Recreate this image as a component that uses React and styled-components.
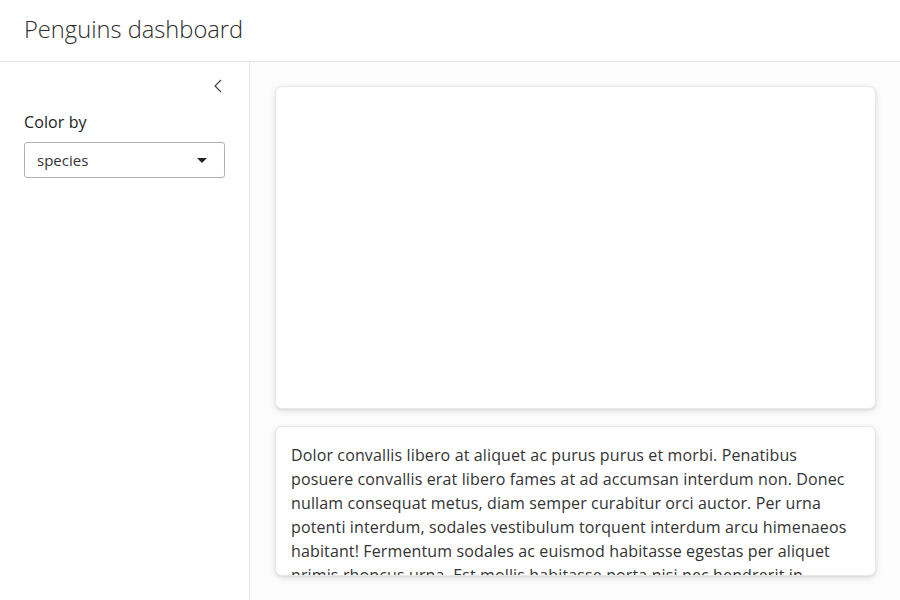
import React from 'react';
import styled, { createGlobalStyle } from 'styled-components';

const GlobalStyle = createGlobalStyle`
  html, body, #root {
    margin: 0;
    height: 100%;
  }
  body {
    font-family: "Open Sans", "Noto Sans", sans-serif;
    color: #333;
    background: #fff;
  }
  * {
    box-sizing: border-box;
  }
`;

const Page = styled.div`
  display: flex;
  flex-direction: column;
  height: 100vh;
`;

const Header = styled.header`
  height: 62px;
  flex: 0 0 62px;
  display: flex;
  align-items: center;
  padding: 0 24px;
  border-bottom: 1px solid #e6e6e6;
  background: #fff;
`;

const Title = styled.h1`
  margin: 0;
  font-size: 23.7px;
  font-weight: 300;
  color: #2b2b2b;
  line-height: 1;
  padding-bottom: 2px;
`;

const Body = styled.div`
  flex: 1;
  display: flex;
  min-height: 0;
`;

const Sidebar = styled.aside`
  width: 250px;
  flex: 0 0 250px;
  border-right: 1px solid #e6e6e6;
  padding: 14px 24px 24px;
  display: flex;
  flex-direction: column;
`;

const CollapseButton = styled.button`
  align-self: flex-end;
  margin-right: -2px;
  width: 18px;
  height: 20px;
  padding: 0;
  border: none;
  background: none;
  color: #444;
  display: flex;
  align-items: center;
  justify-content: center;
`;

const Label = styled.label`
  margin-top: 14px;
  font-size: 16px;
  line-height: 24px;
  color: #222;
  letter-spacing: 0.1px;
`;

const Select = styled.div`
  margin-top: 8px;
  height: 36px;
  border: 1px solid #adb1b5;
  border-radius: 3px;
  display: flex;
  align-items: center;
  justify-content: space-between;
  padding: 0 17px 0 12px;
  font-size: 15px;
  color: #333;
`;

const Caret = styled.span`
  width: 0;
  height: 0;
  border-left: 5px solid transparent;
  border-right: 5px solid transparent;
  border-top: 5px solid #222;
`;

const Main = styled.main`
  flex: 1;
  padding: 24px 24px 24px 25px;
  display: grid;
  grid-template-rows: minmax(0, 323fr) minmax(0, 150fr);
  gap: 17px;
  background: #fcfcfc;
`;

const Card = styled.section`
  background: #fff;
  border: 1px solid #e8e8e8;
  border-radius: 7px;
  box-shadow: 0 2px 6px rgba(0, 0, 0, 0.12), 0 1px 2px rgba(0, 0, 0, 0.06);
  overflow: hidden;
`;

const CardBody = styled.div`
  padding: 16px 15px;
  font-size: 16px;
  line-height: 24px;
  letter-spacing: 0.13px;
  color: #333;
`;

const Paragraph = styled.p`
  margin: 0;
`;

const Chevron = () => (
  <svg width="12" height="16" viewBox="0 0 12 16" fill="none">
    <path d="M9 2 L3 8 L9 14" stroke="#444" strokeWidth="1.2" />
  </svg>
);

const lorem =
  'Dolor convallis libero at aliquet ac purus purus et morbi. Penatibus posuere convallis erat libero fames at ad accumsan interdum non. Donec nullam consequat metus, diam semper curabitur orci auctor. Per urna potenti interdum, sodales vestibulum torquent interdum arcu himenaeos habitant! Fermentum sodales ac euismod habitasse egestas per aliquet primis rhoncus urna. Est mollis habitasse porta nisi nec hendrerit in quisque. Sapien tempus vehicula lacinia gravida ultrices nunc nisl sociosqu.';

export default function App() {
  return (
    <Page>
      <GlobalStyle />
      <Header>
        <Title>Penguins dashboard</Title>
      </Header>
      <Body>
        <Sidebar>
          <CollapseButton type="button" aria-label="Toggle sidebar">
            <Chevron />
          </CollapseButton>
          <Label>Color by</Label>
          <Select>
            <span>species</span>
            <Caret />
          </Select>
        </Sidebar>
        <Main>
          <Card />
          <Card>
            <CardBody>
              <Paragraph>{lorem}</Paragraph>
            </CardBody>
          </Card>
        </Main>
      </Body>
    </Page>
  );
}
